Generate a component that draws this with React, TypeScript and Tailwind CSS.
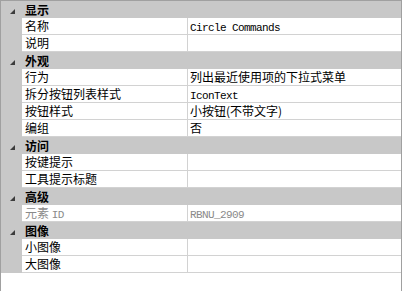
import type { ReactNode } from "react";

type Prop = { name: ReactNode; value?: ReactNode; muted?: boolean };
type Section = { title: string; props: Prop[] };

const mono = "font-['Liberation_Mono',monospace] text-[11px] tracking-[-0.6px]";

const sections: Section[] = [
  {
    title: "显示",
    props: [
      { name: "名称", value: <span className={mono}>Circle Commands</span> },
      { name: "说明" },
    ],
  },
  {
    title: "外观",
    props: [
      { name: "行为", value: "列出最近使用项的下拉式菜单" },
      { name: "拆分按钮列表样式", value: <span className={mono}>IconText</span> },
      { name: "按钮样式", value: "小按钮(不带文字)" },
      { name: "编组", value: "否" },
    ],
  },
  {
    title: "访问",
    props: [{ name: "按键提示" }, { name: "工具提示标题" }],
  },
  {
    title: "高级",
    props: [
      {
        name: (
          <>
            元素 <span className={mono}>ID</span>
          </>
        ),
        value: <span className={mono}>RBNU_2909</span>,
        muted: true,
      },
    ],
  },
  {
    title: "图像",
    props: [{ name: "小图像" }, { name: "大图像" }],
  },
];

function Expander() {
  return (
    <svg width="5" height="5" viewBox="0 0 5 5" className="mt-[8px] ml-[9px]">
      <polygon points="5,0 5,5 0,5" fill="#3c3c3c" />
    </svg>
  );
}

function HeaderRow({ title }: { title: string }) {
  return (
    <div className="flex h-[17px] bg-[#c8c8c8]">
      <div className="w-[21px] shrink-0 flex items-start">
        <Expander />
      </div>
      <div className="pl-[3px] font-bold leading-[17px] text-black">{title}</div>
    </div>
  );
}

function PropRow({ name, value, muted }: Prop) {
  const color = muted ? "text-[#8a8a8a]" : "text-black";
  return (
    <div className="flex h-[17px]">
      <div className="w-[21px] shrink-0 bg-[#c8c8c8]" />
      <div className="flex flex-1 border-b border-[#d2d2d2] bg-white">
        <div
          className={`w-[166px] shrink-0 border-r border-[#d2d2d2] pl-[3px] leading-[16px] whitespace-nowrap ${color}`}
        >
          {name}
        </div>
        <div className={`flex-1 pl-[2px] leading-[16px] whitespace-nowrap ${color}`}>
          {value}
        </div>
      </div>
    </div>
  );
}

export default function App() {
  return (
    <div className="w-[402px] h-[291px] overflow-hidden bg-white border-l border-t border-r border-[#a0a0a0] font-['Noto_Sans_CJK_SC',sans-serif] text-[12px]">
      {sections.map((s) => (
        <div key={s.title}>
          <HeaderRow title={s.title} />
          {s.props.map((p, i) => (
            <PropRow key={i} {...p} />
          ))}
        </div>
      ))}
    </div>
  );
}
